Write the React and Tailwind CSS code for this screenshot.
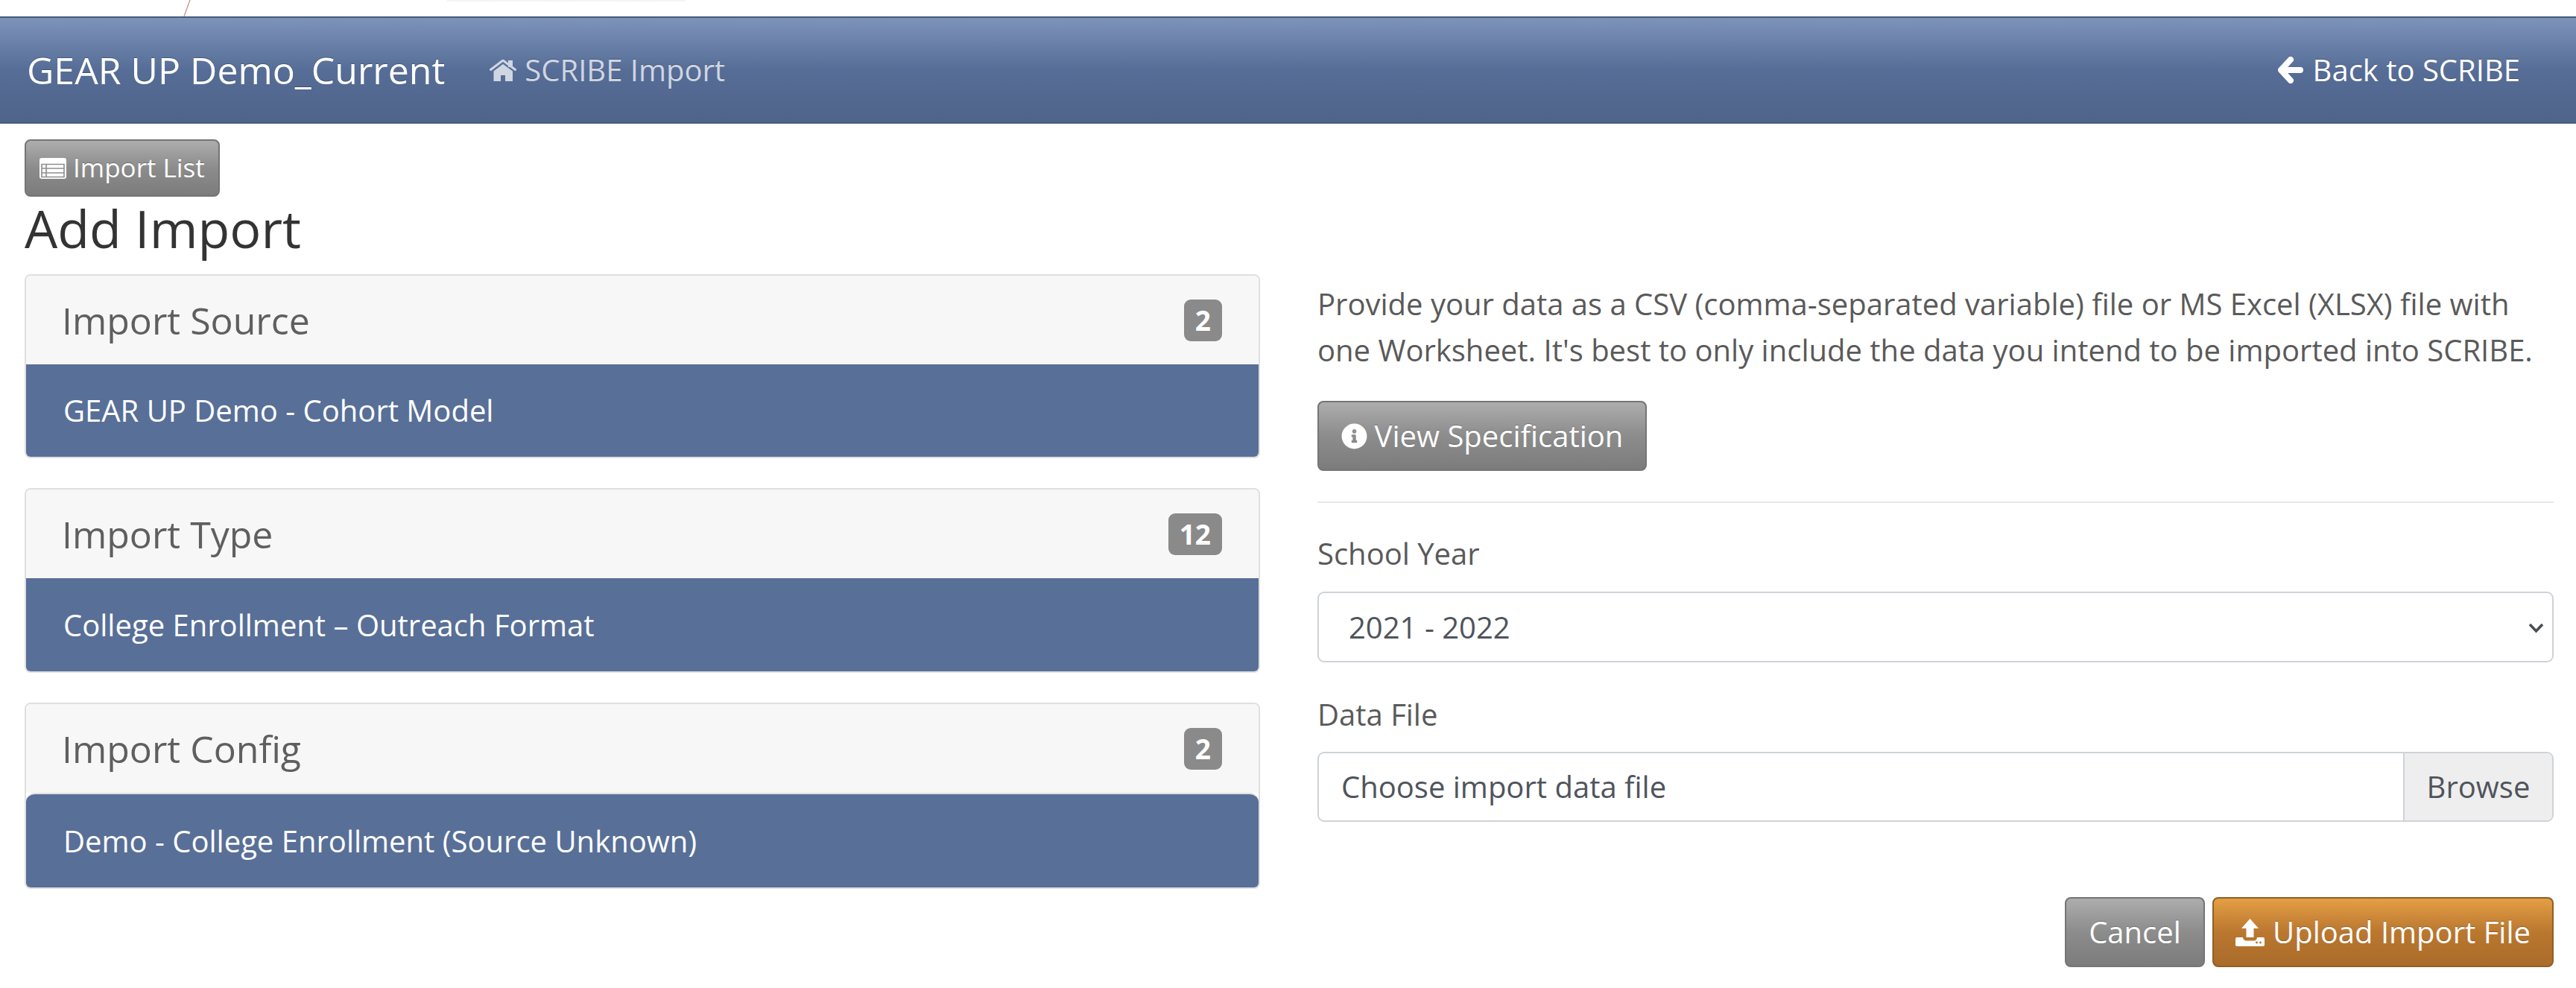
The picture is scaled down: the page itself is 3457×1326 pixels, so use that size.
import { FaInfoCircle } from "react-icons/fa";

const grayBtn =
  "bg-gradient-to-b from-[#adadad] via-[#8c8c8c] via-50% to-[#7c7c7c] border-2 border-[#757575] text-white rounded-[8px] whitespace-nowrap [text-shadow:0_-1px_0_rgba(0,0,0,0.25)]";

function HomeIcon() {
  return (
    <svg viewBox="0 0 36 29" className="w-[36px] h-[29px] shrink-0 fill-[#cfd6e2]">
      <path d="M25 1h6v9h-6z" />
      <path d="M1.5 13.5 18 1l16.5 12.5" fill="none" stroke="#cfd6e2" strokeWidth="3" strokeLinecap="round" />
      <path d="M5.5 15.5 18 6l13 9.5V29H21v-8h-6v8H5.5z" />
    </svg>
  );
}

function BackIcon() {
  return (
    <svg viewBox="0 0 34 36" className="w-[34px] h-[36px] shrink-0">
      <path d="M17 4 4 18l13 14M5 18h25" fill="none" stroke="white" strokeWidth="8" strokeLinecap="round" strokeLinejoin="round" />
    </svg>
  );
}

function ListIcon() {
  return (
    <svg viewBox="0 0 36 28" className="w-[36px] h-[28px] shrink-0">
      <rect width="36" height="28" rx="3" fill="white" />
      <path d="M3 8.5h30v17H3zM3 14h30M3 20h30M9 8.5v17" fill="none" stroke="#8e8e8e" strokeWidth="1.6" />
    </svg>
  );
}

function UploadIcon() {
  return (
    <svg viewBox="0 0 39 37" className="w-[39px] h-[37px] shrink-0 fill-white">
      <path d="M19.5 0 31 13h-6.5v12h-10V13H8z" />
      <path d="M2 25h8c0 3 3 4.500 4 4.500h11c2 0 4-2 4-4.500h8a2 2 0 0 1 2 2v8a2 2 0 0 1-2 2H2a2 2 0 0 1-2-2v-8a2 2 0 0 1 2-2z" />
      <circle cx="28.500" cy="32" r="1.400" fill="#b0722c" />
      <circle cx="33.500" cy="32" r="1.400" fill="#b0722c" />
    </svg>
  );
}

function Panel({ title, count, item, itemClass }) {
  return (
    <div className="border-2 border-[#dfdfdf] rounded-[8px] overflow-hidden bg-white">
      <div className="h-[119px] bg-[#f7f7f7] flex items-center justify-between pl-[48px] pr-[49px]">
        <h3 className="text-[50px] text-[#5f5f5f] leading-none">{title}</h3>
        <span className="h-[56px] px-[15px] rounded-[9px] bg-[#8a8a8a] text-white text-[37px] font-bold flex items-center justify-center">
          {count}
        </span>
      </div>
      <div className={`bg-[#586f98] text-white text-[40px] flex items-center pl-[50px] ${itemClass}`}>
        {item}
      </div>
    </div>
  );
}

export default function App() {
  return (
    <div className="min-h-[1326px] bg-white font-['Open_Sans',sans-serif] text-[#5a5a5a]">
      <div className="relative h-[22px] overflow-hidden">
        <svg viewBox="0 0 10 22" className="absolute top-0 left-[246px] w-[10px] h-[22px]">
          <path d="M1 22 9 0" stroke="#c98a8a" strokeWidth="1.200" fill="none" />
        </svg>
        <div className="absolute top-0 left-[600px] w-[320px] h-[3px] bg-gradient-to-b from-[#f0f0f0] to-white" />
      </div>
      <nav className="h-[144px] border-y-2 border-[#465a7e] bg-gradient-to-b from-[#7d93ba] via-[#566d97] via-50% to-[#4f6489] flex items-center pl-[36px] pr-[75px] [text-shadow:0_-1px_0_rgba(0,0,0,0.25)]">
        <span className="text-[50px] text-white">GEAR UP Demo_Current</span>
        <a className="ml-[60px] text-[40px] text-[#cfd6e2] flex items-center gap-[11px]">
          <HomeIcon />
          SCRIBE Import
        </a>
        <a className="ml-auto text-[40px] text-white flex items-center gap-[13px]">
          <BackIcon />
          Back to SCRIBE
        </a>
      </nav>

      <div className="pl-[33px] pr-[30px] pt-[21px]">
        <button className={`${grayBtn} h-[77px] w-[262px] text-[35px] flex items-center pl-[18px] gap-[9px]`}>
          <ListIcon />
          Import List
        </button>
        <h1 className="text-[70px] text-[#333333] leading-[100px] -mt-[8px]">Add Import</h1>

        <div className="grid grid-cols-[1658px_1fr] gap-x-[77px] mt-[12px]">
          <div className="flex flex-col gap-[40px]">
            <Panel title="Import Source" count="2" item="GEAR UP Demo - Cohort Model" itemClass="h-[124px]" />
            <Panel title="Import Type" count="12" item="College Enrollment – Outreach Format" itemClass="h-[125px]" />
            <Panel
              title="Import Config"
              count="2"
              item="Demo - College Enrollment (Source Unknown)"
              itemClass="h-[127px] rounded-t-[12px] border-t-2 border-[#dfdfdf]"
            />
          </div>

          <div>
            <p className="text-[40px] leading-[62px] mt-[9px]">
              Provide your data as a CSV (comma-separated variable) file or MS Excel (XLSX) file with one Worksheet. It's best to only include the data you intend to be imported into SCRIBE.
            </p>
            <button className={`${grayBtn} mt-[37px] h-[94px] w-[442px] text-[40px] flex items-center justify-center gap-[10px]`}>
              <FaInfoCircle className="w-[35px] h-[35px]" />
              View Specification
            </button>
            <hr className="mt-[41px] border-t-2 border-[#e8e8e8]" />
            <label className="block mt-[37px] text-[40px] leading-[62px]">School Year</label>
            <div className="relative mt-[20px]">
              <select className="appearance-none w-full h-[95px] border-2 border-[#cfd3d8] rounded-[9px] pl-[40px] text-[40px] text-[#50545c] bg-white">
                <option>2021 - 2022</option>
              </select>
              <svg viewBox="0 0 21 14" className="absolute right-[13px] top-[42px] w-[21px] h-[14px]">
                <path d="M2 2l8.500 9L19 2" fill="none" stroke="#4a4d52" strokeWidth="3.600" />
              </svg>
            </div>
            <label className="block mt-[39px] text-[40px] leading-[62px]">Data File</label>
            <div className="mt-[19px] h-[94px] border-2 border-[#cfd3d8] rounded-[9px] overflow-hidden flex items-center text-[40px] text-[#50545c]">
              <span className="flex-1 pl-[30px]">Choose import data file</span>
              <span className="h-full w-[200px] bg-[#eeeeee] border-l-2 border-[#cfd3d8] flex items-center justify-center">Browse</span>
            </div>
            <div className="mt-[101px] flex justify-end gap-[10px]">
              <button className={`${grayBtn} h-[94px] w-[188px] text-[40px]`}>Cancel</button>
              <button className="h-[94px] w-[458px] rounded-[8px] border-2 border-[#8f5f26] bg-gradient-to-b from-[#e49f45] via-[#ba772f] via-50% to-[#aa6c2a] text-white text-[40px] flex items-center justify-center gap-[11px] [text-shadow:0_-1px_0_rgba(0,0,0,0.25)]">
                <UploadIcon />
                Upload Import File
              </button>
            </div>
          </div>
        </div>
      </div>
    </div>
  );
}
